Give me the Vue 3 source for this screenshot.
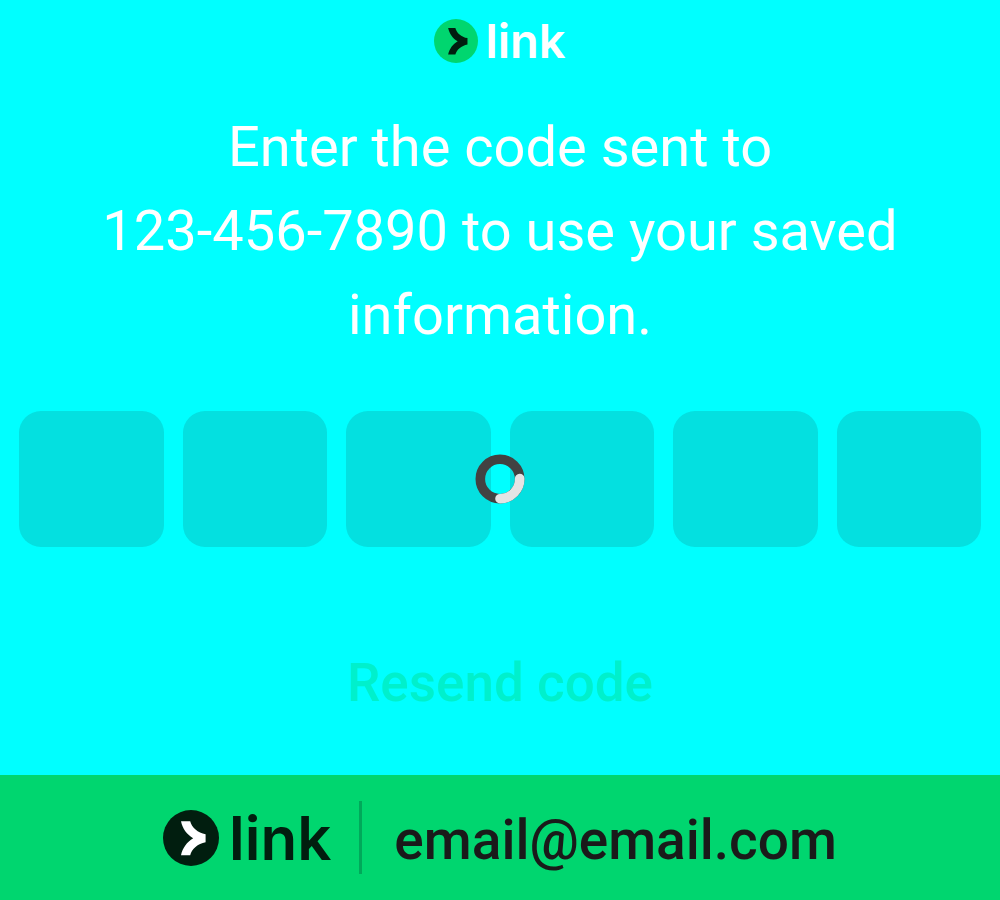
<script setup>
import { ref } from 'vue'

const phone = '123-456-7890'
const email = 'email@email.com'
const digits = ref(['', '', '', '', '', ''])
const arrow =
  'M18 11.3H27.2C28.7 17.7 34.8 22.8 42.6 24.3V32.3C34.8 33.8 28.7 39 27.2 45.3H18C19.5 38 24 32 30.2 28.3C24 24.7 19.5 18.6 18 11.3Z'
</script>

<template>
  <div class="page">
    <main class="verify">
      <div class="logo logo-small">
        <svg class="mark" viewBox="0 0 56 56" aria-hidden="true">
          <circle cx="28" cy="28" r="28" fill="#00d66f" />
          <path :d="arrow" fill="#011e0f" />
        </svg>
        <span class="word">link</span>
      </div>

      <p class="message">Enter the code sent to<br />{{ phone }} to use your saved information.</p>

      <form class="code" @submit.prevent>
        <input
          v-for="(d, i) in digits"
          :key="i"
          v-model="digits[i]"
          class="digit"
          inputmode="numeric"
          maxlength="1"
          disabled
          :aria-label="`Digit ${i + 1}`"
        />
        <svg class="spinner" viewBox="0 0 50 50" role="status" aria-label="Loading">
          <circle cx="25" cy="25" r="19.7" fill="none" stroke="#424242" stroke-width="9.6" />
          <path d="M44.7 24.5A19.7 19.7 0 0 1 25 44.7" fill="none" stroke="#e4e4e4" stroke-width="9.6" stroke-linecap="round" />
        </svg>
      </form>

      <button class="resend" type="button" disabled>Resend code</button>
    </main>

    <footer class="account">
      <div class="logo logo-large">
        <svg class="mark" viewBox="0 0 56 56" aria-hidden="true">
          <circle cx="28" cy="28" r="28" fill="#011e0f" />
          <path :d="arrow" fill="#ffffff" />
        </svg>
        <span class="word">link</span>
      </div>
      <span class="divider"></span>
      <span class="email">{{ email }}</span>
    </footer>
  </div>
</template>

<style>
body {
  margin: 0;
  background: #00ffff;
}
</style>

<style scoped>
.page {
  box-sizing: border-box;
  min-height: 100vh;
  display: flex;
  flex-direction: column;
  font-family: Roboto, sans-serif;
  background: #00ffff;
}

.verify {
  flex: 1;
  display: flex;
  flex-direction: column;
  align-items: center;
  padding: 16px 19px 0;
}

.logo {
  display: flex;
  align-items: center;
}

.mark {
  display: block;
}

.word {
  font-family: Inter, sans-serif;
  font-weight: 600;
}

.logo-small {
  gap: 7px;
  height: 50px;
  color: #ffffff;
}

.logo-small .mark {
  width: 44px;
  height: 44px;
}

.logo-small .word {
  font-size: 47px;
  line-height: 52px;
}

.message {
  max-width: 860px;
  margin: 39px 0 0;
  font-size: 56px;
  line-height: 84px;
  text-align: center;
  color: #ffffff;
}

.code {
  position: relative;
  align-self: stretch;
  display: grid;
  grid-template-columns: repeat(6, 1fr);
  gap: 19px;
  margin-top: 54px;
}

.digit {
  box-sizing: border-box;
  width: 100%;
  min-width: 0;
  height: 136px;
  padding: 0;
  border: 0;
  border-radius: 22px;
  background: #04e0e0;
  font: 400 56px Roboto, sans-serif;
  text-align: center;
  color: #ffffff;
}

.spinner {
  position: absolute;
  inset: 0;
  width: 50px;
  height: 50px;
  margin: auto;
}

.resend {
  margin-top: 96px;
  padding: 0;
  border: 0;
  background: none;
  font: 500 53px/80px Roboto, sans-serif;
  color: #00d66f;
  opacity: 0.35;
}

.account {
  display: flex;
  align-items: center;
  justify-content: center;
  height: 125px;
  background: #00d66f;
}

.logo-large {
  gap: 10px;
  color: #011e0f;
}

.logo-large .mark {
  width: 56px;
  height: 56px;
}

.logo-large .word {
  font-size: 60px;
  line-height: 64px;
}

.divider {
  width: 3px;
  height: 73px;
  margin: 0 32px 0 28px;
  background: #00a95a;
}

.email {
  padding-top: 4px;
  font-size: 55px;
  font-weight: 500;
  line-height: 64px;
  color: #1a1a1a;
}
</style>
